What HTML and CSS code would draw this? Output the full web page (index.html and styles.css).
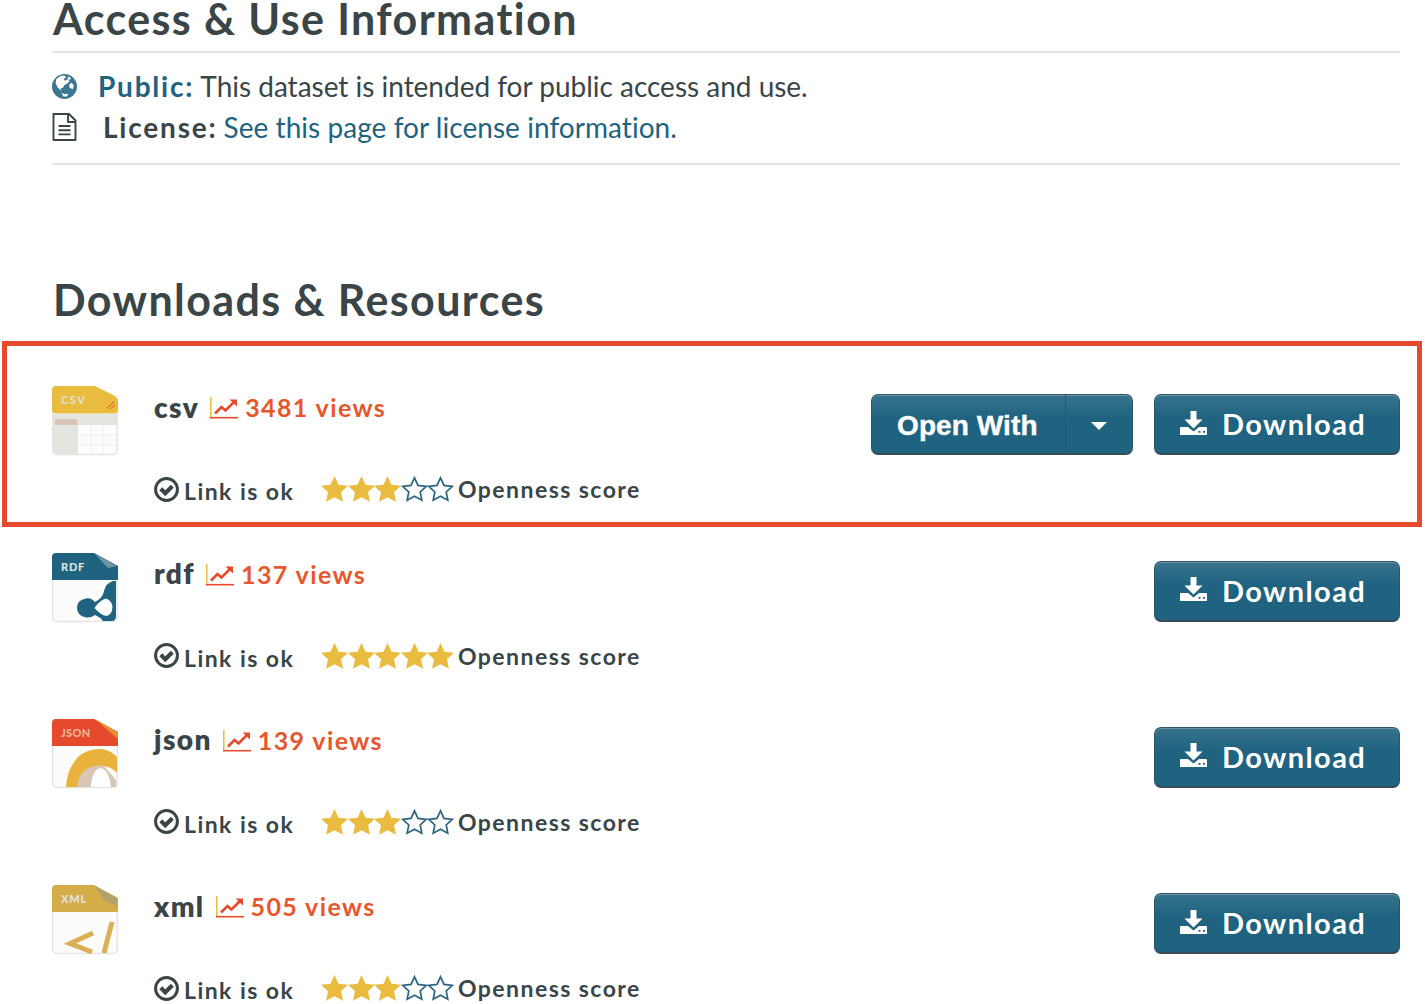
FILE: index.html
```html
<!DOCTYPE html>
<html lang="en">
<head>
<meta charset="utf-8">
<title>Downloads &amp; Resources</title>
<link rel="stylesheet" href="styles.css">
</head>
<body>
<svg class="defs" width="0" height="0" aria-hidden="true">
  <symbol id="globe" viewBox="0 0 24 24"><circle cx="12" cy="12" r="12" fill="#3d7690"/><path fill="#fff" d="M4 5 8 2l4-.5L13.500 3 11 5l1.500 1.500L15 5l2 2-3 2.500-2.500 1.500-1 2.500L8 14l1 2.500L5.500 13 3.500 9zM15.500 2.500l3 1.500-1.500 1.500-2-.5zM16.500 10l2.500-1.500 2 2.500-1 3.500-3-1zM9 18l3 1.500 4-.5-2 2.500h-3z"/></symbol>
  <symbol id="doc" viewBox="0 0 24 28"><path fill="none" stroke="#3a4548" stroke-width="1.900" stroke-linejoin="round" d="M1 1h15.500L23 7.500V27H1zM15.500 1v8H23"/><path stroke="#3a4548" stroke-width="1.900" d="M6 13h12M6 17.200h12M6 21.400h12"/></symbol>
  <symbol id="chart" viewBox="0 0 28 22"><path fill="none" stroke="#e9bb3e" stroke-width="1.500" d="M.8 0v21"/><path fill="none" stroke="#e64a2c" stroke-width="1.600" d="M0 20.700h28"/><path fill="none" stroke="#e64a2c" stroke-width="2.600" d="M5 16.500 11.500 10l4 3.500L24 5"/><path fill="#e64a2c" d="M19.500 2.500H27v7z"/></symbol>
  <symbol id="check" viewBox="0 0 24 24"><circle cx="12" cy="12" r="10.500" fill="none" stroke="#3a4548" stroke-width="2.900"/><path fill="none" stroke="#3a4548" stroke-width="4" d="M6.500 11.300 10.800 15.600 17.600 8.800"/></symbol>
  <symbol id="star" viewBox="0 0 27 26"><path fill="#e9bb3e" d="M13.500 0 17.500 8.700 27 9.800 20 16.200 22 25.700 13.500 21.200 5 25.700 7 16.200 0 9.800 9.500 8.700z"/></symbol>
  <symbol id="star-o" viewBox="0 0 27 26"><path fill="#fff" stroke="#2b6480" stroke-width="1.700" d="M13.500 1.800 17 9.400 25.200 10.400 19.200 16 20.800 24.200 13.500 20.300 6.200 24.200 7.800 16 1.800 10.400 10 9.400z"/></symbol>
  <symbol id="save" viewBox="0 0 27 24"><path fill="#fff" d="M10.500 0h6v8.500h6L13.500 17.500 4.500 8.500h6z"/><path fill="#fff" fill-rule="evenodd" d="M1 16h7l5.500 4.500L19 16h7q1 0 1 1v6.500q0 .5-1 .5H1q-1 0-1-.5V17q0-1 1-1zM18.500 20v1.800h2V20zM23 20v1.800h2V20z"/></symbol>
</svg>
<main class="page">
  <section class="access">
    <h2 class="heading"><span>Access &amp; Use Information</span></h2>
    <div class="terms">
      <p class="term public"><svg class="globe"><use href="#globe"/></svg><strong>Public:</strong><span>This dataset is intended for public access and use.</span></p>
      <p class="term license"><svg class="doc"><use href="#doc"/></svg><strong>License:</strong><a>See this page for license information.</a></p>
    </div>
  </section>
  <section class="downloads">
    <h2 class="heading"><span>Downloads &amp; Resources</span></h2>
    <ul class="resources">
      <li class="resource marked">
        <svg class="file" viewBox="0 0 66 70"><rect x=".7" y="1" width="64.600" height="67.500" rx="4" fill="#fcfcfb" stroke="#e4e5e0" stroke-width="1.500"/><path fill="#e4e5e0" d="M1 28h64v11H26v29H5q-4 0-4-4z"/><path fill="#d9c4b5" d="M3 33h22v6H3z"/><path stroke="#eeeeeb" stroke-width="1" d="M39 39v29M51 39v29M26 49h39M26 59h39"/><path fill="#fff" d="M42 0H66V13z"/><path fill="#e9bb3e" d="M4 0H43L63 10Q66 12 66 15V24Q66 27.500 62 27.500H4Q0 27.500 0 23.500V4Q0 0 4 0z"/><path stroke="#e64a2c" d="m55 22 7-6M58 23l5-4"/><text class="tag csv" x="9" y="18">CSV</text></svg>
        <div class="info">
          <p class="title"><a class="name">csv</a><svg class="chart"><use href="#chart"/></svg><span class="views">3481 views</span></p>
          <p class="status"><svg class="check"><use href="#check"/></svg><span class="link">Link is ok</span><span class="stars"><svg><use href="#star"/></svg><svg><use href="#star"/></svg><svg><use href="#star"/></svg><svg><use href="#star-o"/></svg><svg><use href="#star-o"/></svg></span><span class="score">Openness score</span></p>
        </div>
        <div class="actions"><div class="btn open"><span class="open-label">Open With</span><span class="toggle"><i class="caret"></i></span></div><a class="btn download"><svg class="save"><use href="#save"/></svg><span>Download</span></a></div>
      </li>
      <li class="resource">
        <svg class="file" viewBox="0 0 66 70"><rect x=".7" y="1" width="64.600" height="67.500" rx="4" fill="#fcfcfb" stroke="#e4e5e0" stroke-width="1.500"/><path fill="#fff" d="M42 0H66V13z"/><path fill="#1f6380" d="M4 0H42L66 13V27H0V4Q0 0 4 0z"/><path fill="#6f93a3" d="M43 1 65 13 56 15z"/><path fill="#1f6380" d="M64 28H61Q54 30 52 38 51 45 43 49 39 44 34 45.500 25 47 25 54.500 25 63 34 64.500 39 65 43 62 48 64 51 68H60Q64 68 64 63z"/><path fill="#fff" d="M54 45.500q6 2 6.500 8.500-.5 8-6 9-6-1-12-8 5-8 11.500-9.500z"/><text class="tag" x="9" y="17.500">RDF</text></svg>
        <div class="info">
          <p class="title"><a class="name">rdf</a><svg class="chart"><use href="#chart"/></svg><span class="views">137 views</span></p>
          <p class="status"><svg class="check"><use href="#check"/></svg><span class="link">Link is ok</span><span class="stars"><svg><use href="#star"/></svg><svg><use href="#star"/></svg><svg><use href="#star"/></svg><svg><use href="#star"/></svg><svg><use href="#star"/></svg></span><span class="score">Openness score</span></p>
        </div>
        <div class="actions"><a class="btn download"><svg class="save"><use href="#save"/></svg><span>Download</span></a></div>
      </li>
      <li class="resource">
        <svg class="file" viewBox="0 0 66 70"><rect x=".7" y="1" width="64.600" height="67.500" rx="4" fill="#fcfcfb" stroke="#e4e5e0" stroke-width="1.500"/><path fill="#fff" d="M42 0H66V13z"/><path fill="#e64a2c" d="M4 0H42L66 13V27H0V4Q0 0 4 0z"/><path fill="#e8902f" d="M43 0 66 13V20z"/><path fill="#e9b23c" d="M14 68Q15 50 26 38 36 29 50 30 60 32 65 38V54Q58 46 48 47 37 51 38 68z"/><path fill="#d9c6b4" d="M25 68Q26 57 33 51 42 45 52 47L64 61V68H58Q56 50 49 50 41 52 39 68z"/><path fill="#fff" d="M39 68Q40 50 49 49 57 51 59 68z"/><text class="tag json" x="9" y="18">JSON</text></svg>
        <div class="info">
          <p class="title"><a class="name">json</a><svg class="chart"><use href="#chart"/></svg><span class="views">139 views</span></p>
          <p class="status"><svg class="check"><use href="#check"/></svg><span class="link">Link is ok</span><span class="stars"><svg><use href="#star"/></svg><svg><use href="#star"/></svg><svg><use href="#star"/></svg><svg><use href="#star-o"/></svg><svg><use href="#star-o"/></svg></span><span class="score">Openness score</span></p>
        </div>
        <div class="actions"><a class="btn download"><svg class="save"><use href="#save"/></svg><span>Download</span></a></div>
      </li>
      <li class="resource">
        <svg class="file" viewBox="0 0 66 70"><rect x=".7" y="1" width="64.600" height="67.500" rx="4" fill="#fcfcfb" stroke="#e4e5e0" stroke-width="1.500"/><path fill="#fff" d="M42 0H66V13z"/><path fill="#d4ac48" d="M4 0H42L66 13V27H0V4Q0 0 4 0z"/><path fill="#b0a26a" d="M43 1 65 13V21L52 15z"/><path fill="none" stroke="#d9af58" stroke-width="5" d="M41 48 18 58.500 40 67M60 37 52 68"/><text class="tag" x="9" y="18">XML</text></svg>
        <div class="info">
          <p class="title"><a class="name">xml</a><svg class="chart"><use href="#chart"/></svg><span class="views">505 views</span></p>
          <p class="status"><svg class="check"><use href="#check"/></svg><span class="link">Link is ok</span><span class="stars"><svg><use href="#star"/></svg><svg><use href="#star"/></svg><svg><use href="#star"/></svg><svg><use href="#star-o"/></svg><svg><use href="#star-o"/></svg></span><span class="score">Openness score</span></p>
        </div>
        <div class="actions"><a class="btn download"><svg class="save"><use href="#save"/></svg><span>Download</span></a></div>
      </li>
    </ul>
  </section>
</main>
</body>
</html>
```
FILE: styles.css
```css
*, *::after { box-sizing: border-box; }
body {
  margin: 0;
  height: 1004px;
  overflow: hidden;
  background: #fff;
  color: #3a4548;
  font-family: Lato, "Liberation Sans", sans-serif;
  font-variant-ligatures: none;
}
p, h2, ul { margin: 0; padding: 0; }
.defs { position: absolute; }
svg { flex: none; display: block; }
.page { padding: 0 25px 0 52px; }
.heading {
  height: 52px;
  line-height: 52px;
  font-size: 43px;
  font-weight: 700;
  letter-spacing: 1.4px;
  white-space: nowrap;
}
.heading span { margin-left: 1px; }
.access .heading { height: 51px; line-height: 38px; }
.terms {
  height: 114px;
  padding-top: 12px;
  border-top: 2px solid #e4e5e0;
  border-bottom: 2px solid #e4e5e0;
}
.term {
  display: flex;
  align-items: center;
  height: 41px;
  font-size: 28px;
  letter-spacing: -.01px;
  white-space: nowrap;
}
.term strong { font-weight: 700; letter-spacing: 1.8px; margin-right: 6px; }
.term a { letter-spacing: .05px; }
.public strong, .term a { color: #1f6380; }
.globe { width: 25px; height: 25px; margin: 2px 21px 0 0; }
.doc { width: 25px; height: 28px; margin: 1px 26px 0 0; }
.downloads { padding-top: 109px; }
.resources { list-style: none; margin-top: 15px; }
.resource {
  position: relative;
  display: flex;
  height: 166.300px;
  padding-top: 45.300px;
}
.marked::after {
  content: "";
  position: absolute;
  inset: 0 -22px auto -50px;
  height: 186px;
  border: 5px solid #e64a2c;
}
.file { width: 66px; height: 70px; margin-right: 36px; }
.tag { font: 900 11px Lato, sans-serif; letter-spacing: .8px; fill: #dfe3df; }
.csv { font-weight: 700; letter-spacing: 1.500px; }
.json { letter-spacing: .3px; fill: #e9b795; }
.info { flex: 1; }
.title { display: flex; align-items: center; height: 41px; white-space: nowrap; }
.name { font-size: 28px; font-weight: 800; letter-spacing: 1.4px; margin-right: 11px; }
.chart { width: 28px; height: 22px; margin: 3px 7px 0 0; }
.views { margin-top: 1px; font-size: 25px; font-weight: 700; letter-spacing: 1.4px; color: #e7572d; }
.status { display: flex; align-items: center; height: 40px; margin-top: 42px; white-space: nowrap; font-size: 23px; font-weight: 700; letter-spacing: 1.45px; }
.check { width: 25px; height: 25px; margin-right: 5px; }
.link { width: 137px; padding-top: 4px; }
.stars { display: flex; width: 137px; }
.stars svg { width: 27px; height: 26px; margin-right: -.5px; }
.actions { display: flex; gap: 21px; padding-top: 8px; }
.btn {
  display: flex;
  align-items: center;
  height: 61px;
  border-radius: 7px;
  border: 1px solid #2a566a;
  border-bottom: 2px solid #364c57;
  background: linear-gradient(#37728c, #1f6380 40%);
  box-shadow: inset 0 1px #6f93a3;
  color: #fff;
  white-space: nowrap;
}
.download { width: 246px; padding-left: 25px; font-size: 29px; font-weight: 700; letter-spacing: 1.4px; }
.download span { margin-top: -1px; }
.save { width: 27px; height: 24px; margin: -3px 15px 0 0; }
.open { width: 262px; font: 700 28px "Liberation Sans", sans-serif; letter-spacing: .1px; }
.open-label { width: 193px; padding: 3px 0 0 25px; -webkit-text-stroke: .4px #fff; }
.toggle { display: flex; align-items: center; justify-content: center; flex: 1; align-self: stretch; padding-top: 4px; border-left: 1px solid #24596f; }
.caret { border: 8px solid transparent; border-top-color: #fff; border-bottom: 0; }
```
